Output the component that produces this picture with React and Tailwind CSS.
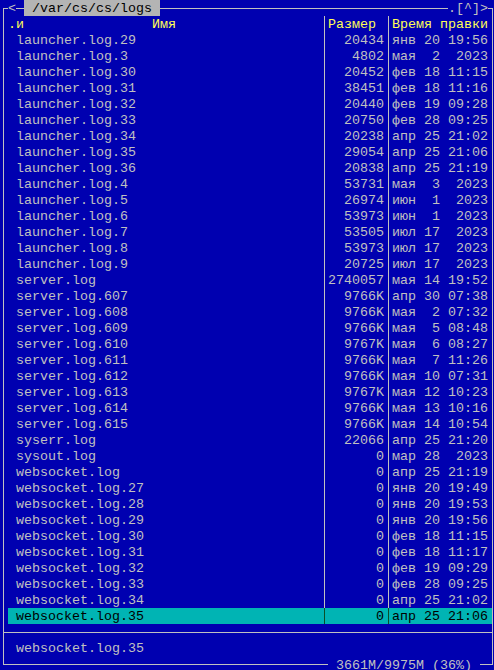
import React from "react";

const files = [
  ["launcher.log.29", "20434", "янв 20 19:56"],
  ["launcher.log.3", "4802", "мая  2  2023"],
  ["launcher.log.30", "20452", "фев 18 11:15"],
  ["launcher.log.31", "38451", "фев 18 11:16"],
  ["launcher.log.32", "20440", "фев 19 09:28"],
  ["launcher.log.33", "20750", "фев 28 09:25"],
  ["launcher.log.34", "20238", "апр 25 21:02"],
  ["launcher.log.35", "29054", "апр 25 21:06"],
  ["launcher.log.36", "20838", "апр 25 21:19"],
  ["launcher.log.4", "53731", "мая  3  2023"],
  ["launcher.log.5", "26974", "июн  1  2023"],
  ["launcher.log.6", "53973", "июн  1  2023"],
  ["launcher.log.7", "53505", "июл 17  2023"],
  ["launcher.log.8", "53973", "июл 17  2023"],
  ["launcher.log.9", "20725", "июл 17  2023"],
  ["server.log", "2740057", "мая 14 19:52"],
  ["server.log.607", "9766K", "апр 30 07:38"],
  ["server.log.608", "9766K", "мая  2 07:32"],
  ["server.log.609", "9766K", "мая  5 08:48"],
  ["server.log.610", "9767K", "мая  6 08:27"],
  ["server.log.611", "9766K", "мая  7 11:26"],
  ["server.log.612", "9766K", "мая 10 07:31"],
  ["server.log.613", "9767K", "мая 12 10:23"],
  ["server.log.614", "9766K", "мая 13 10:16"],
  ["server.log.615", "9766K", "мая 14 10:54"],
  ["syserr.log", "22066", "апр 25 21:20"],
  ["sysout.log", "0", "мар 28  2023"],
  ["websocket.log", "0", "апр 25 21:19"],
  ["websocket.log.27", "0", "янв 20 19:49"],
  ["websocket.log.28", "0", "янв 20 19:53"],
  ["websocket.log.29", "0", "янв 20 19:56"],
  ["websocket.log.30", "0", "фев 18 11:15"],
  ["websocket.log.31", "0", "фев 18 11:17"],
  ["websocket.log.32", "0", "фев 19 09:29"],
  ["websocket.log.33", "0", "фев 28 09:25"],
  ["websocket.log.34", "0", "апр 25 21:02"],
  ["websocket.log.35", "0", "апр 25 21:06"],
];

const Sep = ({ dark }) => (
  <div className="w-[8px] h-[16px] pl-[4px]">
    <div className={dark ? "w-px h-full bg-[#0b4f2a]" : "w-px h-full bg-[#c0c0c0]"} />
  </div>
);

const Row = ({ name, size, date, selected }) => (
  <div className={`flex h-[16px] ${selected ? "bg-[#00b4b4] text-black" : ""}`}>
    <div className="w-[312px] h-[16px] whitespace-pre overflow-hidden"> {name}</div>
    <Sep dark={selected} />
    <div className="w-[56px] h-[16px] text-right whitespace-pre">{size}</div>
    <Sep dark={selected} />
    <div className="w-[96px] h-[16px] whitespace-pre">{date}</div>
  </div>
);

export default function App() {
  return (
    <div className="w-[494px] h-[670px] overflow-hidden bg-[#0000b0] text-[#c0c0c0] font-['Liberation_Mono',monospace] text-[13.333px] leading-[18px] pt-[8px]">
      {/* panel frame */}
      <div className="relative ml-[3px] w-[490px] h-[657px] border border-[#c0c0c0] pt-[7px]">
        {/* title on top border */}
        <div className="absolute top-[-9px] left-[4px] flex h-[16px]">
          <span className="bg-[#0000b0] w-[8px]">&lt;</span>
          <span className="w-[8px]" />
          <span className="bg-[#b4b4b4] text-black whitespace-pre"> /var/cs/cs/logs </span>
        </div>
        <div className="absolute top-[-9px] left-[444px] h-[16px] bg-[#0000b0] whitespace-pre">.[^]&gt;</div>

        {/* file list */}
        <div className="pl-[4px]">
          <div className="flex h-[16px] text-[#ffff55]">
            <div className="w-[312px] h-[16px] whitespace-pre">.и                Имя</div>
            <Sep />
            <div className="w-[56px] h-[16px] whitespace-pre">Размер</div>
            <Sep />
            <div className="w-[96px] h-[16px] whitespace-pre">Время правки</div>
          </div>
          {files.map(([name, size, date], i) => (
            <Row key={name} name={name} size={size} date={date} selected={i === files.length - 1} />
          ))}
        </div>

        {/* separator */}
        <div className="h-[16px] flex items-center">
          <div className="w-full h-px bg-[#c0c0c0]" />
        </div>

        {/* mini status */}
        <div className="h-[16px] pl-[12px] whitespace-pre">websocket.log.35</div>

        {/* free space on bottom border */}
        <div className="absolute bottom-[-9px] left-[324px] h-[16px] bg-[#0000b0] whitespace-pre"> 3661M/9975M (36%) </div>
      </div>
    </div>
  );
}
